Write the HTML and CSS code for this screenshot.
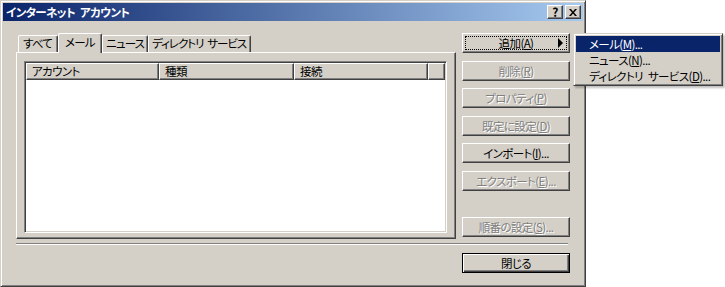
FILE: index.html
```html
<!DOCTYPE html>
<html lang="ja">

<head>
    <meta charset="UTF-8">
    <title>インターネット アカウント</title>
    <link rel="stylesheet" href="styles.css">
</head>

<body>
    <div class="dialog">
        <div class="titlebar">
            <span class="title">インターネット アカウント</span>
            <button class="cap-btn help">?</button>
            <button class="cap-btn close">
                <svg width="8" height="7" viewBox="0 0 8 7"><path d="M0 0h2l2 2.5 2-2.5h2l-3 3.5 3 3.5h-2l-2-2.5-2 2.5h-2l3-3.5z" fill="#000"/></svg>
            </button>
        </div>

        <div class="dialog-body">
            <div class="main-row">
                <div class="left-col">
                    <div class="tabs">
                        <div class="tab tab-all">すべて</div>
                        <div class="tab tab-mail active">メール</div>
                        <div class="tab tab-news">ニュース</div>
                        <div class="tab tab-dir">ディレクトリ サービス</div>
                    </div>
                    <div class="tab-panel">
                        <div class="listview">
                            <div class="lv-header">
                                <div class="lv-col col-account">アカウント</div>
                                <div class="lv-col col-type">種類</div>
                                <div class="lv-col col-conn">接続</div>
                                <div class="lv-col col-fill"></div>
                            </div>
                            <div class="lv-body"></div>
                        </div>
                    </div>
                </div>

                <div class="right-col">
                    <button class="btn focused">追加(<u>A</u>)<span class="arrow"></span></button>
                    <button class="btn" disabled>削除(<u>R</u>)</button>
                    <button class="btn" disabled>プロパティ(<u>P</u>)</button>
                    <button class="btn" disabled>既定に設定(<u>D</u>)</button>
                    <button class="btn">インポート(<u>I</u>)...</button>
                    <button class="btn" disabled>エクスポート(<u>E</u>)...</button>
                    <button class="btn btn-order" disabled>順番の設定(<u>S</u>)...</button>
                </div>
            </div>

            <div class="separator"></div>

            <div class="footer">
                <button class="btn default">閉じる</button>
            </div>
        </div>
    </div>

    <div class="menu">
        <div class="menu-item selected">メール(<u>M</u>)...</div>
        <div class="menu-item">ニュース(<u>N</u>)...</div>
        <div class="menu-item">ディレクトリ サービス(<u>D</u>)...</div>
    </div>
</body>

</html>
```

FILE: styles.css
```css
body {
    margin: 0;
    background: #fff;
    font-family: "Noto Sans CJK JP", "Noto Sans", sans-serif;
    font-size: 11.5px;
    letter-spacing: -0.6px;
    word-spacing: 3px;
    font-feature-settings: "palt";
    color: #000;
}

button {
    font: inherit;
    letter-spacing: inherit;
    word-spacing: inherit;
    font-feature-settings: "palt";
    color: #000;
    padding: 0;
    margin: 0;
}

u {
    text-decoration: underline;
    text-underline-offset: 1px;
}

/* window frame */
.dialog {
    box-sizing: border-box;
    width: 586px;
    height: 287px;
    background: #d4d0c8;
    border: 1px solid;
    border-color: #d4d0c8 #404040 #404040 #d4d0c8;
    box-shadow: inset 1px 1px #fff, inset -1px -1px #808080;
    padding: 2px;
}

.titlebar {
    display: flex;
    align-items: center;
    height: 18px;
    padding: 0 2px 0 3px;
    background: linear-gradient(to right, #0a246a, #a6caf0);
}

.title {
    flex: 1;
    color: #fff;
    font-weight: bold;
    line-height: 18px;
}

.cap-btn {
    box-sizing: border-box;
    width: 16px;
    height: 14px;
    background: #d4d0c8;
    border: 1px solid;
    border-color: #fff #404040 #404040 #fff;
    box-shadow: inset -1px -1px #808080;
    display: flex;
    align-items: center;
    justify-content: center;
    font-weight: bold;
    font-size: 12px;
    line-height: 12px;
}

.cap-btn.close {
    margin-left: 2px;
}

.dialog-body {
    padding: 12px 13px 0 13px;
}

.main-row {
    display: flex;
    gap: 6px;
}

.left-col {
    width: 440px;
    display: flex;
    flex-direction: column;
}

/* tabs */
.tabs {
    display: flex;
    align-items: flex-end;
    height: 19px;
    padding-left: 2px;
    position: relative;
    z-index: 1;
}

.tab {
    box-sizing: border-box;
    height: 17px;
    line-height: 15px;
    padding-left: 4px;
    background: #d4d0c8;
    border-top: 1px solid #fff;
    border-left: 1px solid #fff;
    border-right: 1px solid #404040;
    box-shadow: inset -1px 0 #808080;
    border-radius: 2px 2px 0 0;
    white-space: nowrap;
    letter-spacing: -0.8px;
}

.tab-all {
    width: 40px;
}

.tab-mail {
    width: 44px;
}

.tab-news {
    width: 46px;
    padding-left: 3px;
}

.tab-dir {
    width: 103px;
    padding-left: 3px;
    letter-spacing: -1px;
    word-spacing: 2px;
}

.tab.active {
    height: 20px;
    margin-bottom: -1px;
    line-height: 17px;
    padding-left: 6px;
}

.tab-panel {
    box-sizing: border-box;
    height: 187px;
    border: 1px solid;
    border-color: #fff #404040 #404040 #fff;
    box-shadow: inset -1px -1px #808080;
    padding: 8px 8px 5px 7px;
    display: flex;
}

/* list view */
.listview {
    flex: 1;
    display: flex;
    flex-direction: column;
    background: #fff;
    border: 1px solid;
    border-color: #808080 #fff #fff #808080;
    box-shadow: inset 1px 1px #404040, inset -1px -1px #d4d0c8;
    padding: 1px;
}

.lv-header {
    display: flex;
    height: 17px;
}

.lv-col {
    box-sizing: border-box;
    height: 17px;
    line-height: 15px;
    padding-left: 5px;
    background: #d4d0c8;
    border: 1px solid;
    border-color: #fff #404040 #404040 #fff;
    box-shadow: inset -1px -1px #808080;
}

.col-account {
    width: 133px;
}

.col-type {
    width: 135px;
}

.col-conn {
    width: 134px;
}

.col-fill {
    flex: 1;
}

.lv-body {
    flex: 1;
}

/* buttons */
.right-col {
    width: 108px;
    display: flex;
    flex-direction: column;
    gap: 7.5px;
    padding-bottom: 2px;
}

.btn {
    position: relative;
    box-sizing: border-box;
    width: 108px;
    height: 20px;
    background: #d4d0c8;
    border: 1px solid;
    border-color: #fff #404040 #404040 #fff;
    box-shadow: inset -1px -1px #808080;
    text-align: center;
    line-height: 16px;
}

.btn:disabled {
    color: #808080;
    text-shadow: 1px 1px 0 #fff;
}

.btn-order {
    margin-top: auto;
}

.btn.focused::after {
    content: "";
    position: absolute;
    inset: 2px;
    border: 1px dotted #000;
}

.arrow {
    position: absolute;
    right: 6px;
    top: 4px;
    width: 0;
    height: 0;
    border-top: 5px solid transparent;
    border-bottom: 5px solid transparent;
    border-left: 5px solid #000;
}

.separator {
    width: 552px;
    height: 0;
    margin-top: 4px;
    border-top: 1px solid #808080;
    border-bottom: 1px solid #fff;
}

.footer {
    display: flex;
    justify-content: flex-end;
    width: 554px;
    margin-top: 8px;
}

.btn.default {
    border-color: #000;
    box-shadow: inset 1px 1px #fff, inset -1px -1px #404040, inset -2px -2px #808080;
}

/* popup menu */
.menu {
    position: absolute;
    left: 573px;
    top: 33px;
    box-sizing: border-box;
    width: 150px;
    border: 1px solid;
    border-color: #d4d0c8 #404040 #404040 #d4d0c8;
    background: #d4d0c8;
    box-shadow: inset 1px 1px #fff, inset -1px -1px #808080, 2px 2px 2px rgba(0, 0, 0, 0.25);
    padding: 2px 2px 1px;
}

.menu-item {
    height: 16px;
    line-height: 16px;
    padding-left: 13px;
    white-space: nowrap;
}

.menu-item.selected {
    background: #0a246a;
    color: #fff;
}
```
